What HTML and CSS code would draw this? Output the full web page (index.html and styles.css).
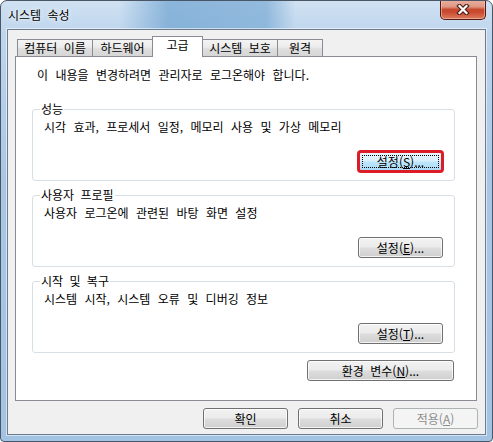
FILE: index.html
```html
<!DOCTYPE html>
<html lang="ko">
<head>
  <meta charset="UTF-8" />
  <meta name="viewport" content="width=device-width, initial-scale=1.0" />
  <title>시스템 속성</title>
  <link rel="stylesheet" href="styles.css">
</head>
<body>

  <div class="window">
    <div class="titlebar">
      <span class="title">시스템 속성</span>
      <button class="close" title="닫기">
        <svg width="16" height="11" viewBox="0 0 16 11">
          <path d="M4.5 2 L11.5 9 M11.5 2 L4.5 9" stroke="#4b1d15" stroke-width="4.4" stroke-linecap="square" fill="none"/>
          <path d="M4.5 2 L11.5 9 M11.5 2 L4.5 9" stroke="#ffffff" stroke-width="2.2" stroke-linecap="square" fill="none"/>
        </svg>
      </button>
    </div>

    <div class="client">
      <div class="tabs">
        <div class="tab t1">컴퓨터 이름</div>
        <div class="tab t2">하드웨어</div>
        <div class="tab t3 active">고급</div>
        <div class="tab t4">시스템 보호</div>
        <div class="tab t5">원격</div>
      </div>

      <div class="panel">
        <p class="note">이 내용을 변경하려면 관리자로 로그온해야 합니다.</p>

        <fieldset class="group">
          <legend>성능</legend>
          <p class="desc">시각 효과, 프로세서 일정, 메모리 사용 및 가상 메모리</p>
          <div class="group-actions">
            <button class="btn focused">설정(<u>S</u>)...</button>
          </div>
        </fieldset>

        <fieldset class="group">
          <legend>사용자 프로필</legend>
          <p class="desc">사용자 로그온에 관련된 바탕 화면 설정</p>
          <div class="group-actions">
            <button class="btn">설정(<u>E</u>)...</button>
          </div>
        </fieldset>

        <fieldset class="group">
          <legend>시작 및 복구</legend>
          <p class="desc">시스템 시작, 시스템 오류 및 디버깅 정보</p>
          <div class="group-actions">
            <button class="btn">설정(<u>T</u>)...</button>
          </div>
        </fieldset>

        <div class="env-row">
          <button class="btn wide">환경 변수(<u>N</u>)...</button>
        </div>
      </div>

      <div class="actions">
        <button class="btn">확인</button>
        <button class="btn">취소</button>
        <button class="btn" disabled>적용(<u>A</u>)</button>
      </div>
    </div>
  </div>

</body>
</html>
```

FILE: styles.css
```css
body {
  margin: 0;
  font-family: "Noto Sans CJK KR", "Liberation Sans", sans-serif;
  font-size: 12px;
  color: #000;
  background-color: #fff;
}

.window {
  width: 493px;
  height: 442px;
  box-sizing: border-box;
  padding: 0 6px 6px 6px;
  border: 1px solid #4a5666;
  border-radius: 7px 7px 4px 4px;
  background:
    linear-gradient(90deg, rgba(255, 255, 255, 0) 24%, rgba(110, 162, 208, 0.7) 34%, rgba(120, 170, 212, 0.7) 54%, rgba(255, 255, 255, 0) 60%) 0 0 / 100% 29px no-repeat,
    linear-gradient(180deg, #d0e1f2 0%, #bdd5ed 8%, #a9c7e5 40%, #a3c3e3 100%);
  overflow: hidden;
}

/* title bar */

.titlebar {
  display: flex;
  align-items: flex-start;
  height: 28px;
  padding-left: 1px;
}

.title {
  margin-top: 6px;
  line-height: 16px;
  word-spacing: 3px;
  text-shadow: 0 0 6px rgba(255, 255, 255, 0.9), 0 0 2px rgba(255, 255, 255, 0.9);
}

.close {
  margin-left: auto;
  margin-top: -1px;
  width: 46px;
  height: 20px;
  padding: 0;
  border: 1px solid #4f1a12;
  border-top: none;
  border-radius: 0 0 5px 5px;
  background: linear-gradient(180deg, #eab0a2 0%, #df9884 35%, #c84a30 50%, #c9482d 62%, #dc7b5d 100%);
  box-shadow: inset 0 0 0 1px rgba(255, 210, 200, 0.5);
  display: flex;
  justify-content: center;
  align-items: center;
}

/* client area */

.client {
  height: 406px;
  box-sizing: border-box;
  padding-top: 6px;
  border: 1px solid #6d7b8c;
  background-color: #f0f0f0;
  box-shadow: 0 0 0 1px rgba(255, 255, 255, 0.55);
}

.tabs {
  display: flex;
  align-items: flex-end;
  height: 20px;
  margin-left: 9px;
  position: relative;
  z-index: 1;
}

.tab {
  box-sizing: border-box;
  height: 17px;
  margin-right: -1px;
  border: 1px solid #898c95;
  border-bottom: none;
  background: linear-gradient(180deg, #f4f4f4 0%, #ebebeb 45%, #dedede 55%, #d6d6d6 100%);
  text-align: center;
  line-height: 15px;
  word-spacing: 3px;
}

.t1 { width: 76px; }
.t2 { width: 61px; }
.t3 { width: 51px; }
.t4 { width: 76px; }
.t5 { width: 46px; }

.tab.active {
  height: 21px;
  margin-bottom: -1px;
  background: #fff;
  line-height: 16px;
  position: relative;
  z-index: 2;
}

.panel {
  width: 462px;
  height: 345px;
  box-sizing: border-box;
  margin-left: 7px;
  padding: 11px 0 0 16px;
  border: 1px solid #898c95;
  background-color: #fff;
}

.note {
  margin: 0 0 20px 5px;
  line-height: 14px;
  word-spacing: 4px;
}

.group {
  width: 423px;
  box-sizing: border-box;
  margin: 0 0 7px 0;
  padding: 0 11px 8px 11px;
  border: 1px solid #d5dfe5;
  border-radius: 3px;
  min-width: 0;
}

.group legend {
  margin-left: -4px;
  padding: 0 1px;
  line-height: 14px;
  word-spacing: 3px;
}

.desc {
  margin: 4px 0 0 0;
  line-height: 14px;
  word-spacing: 4px;
}

.group-actions {
  display: flex;
  justify-content: flex-end;
  margin-top: 17px;
}

.env-row {
  display: flex;
  justify-content: flex-end;
  width: 422px;
  margin-top: 5px;
}

/* buttons */

.btn {
  width: 85px;
  height: 21px;
  box-sizing: border-box;
  padding: 0;
  font-family: inherit;
  font-size: 12px;
  line-height: 19px;
  color: #000;
  border: 1px solid #707070;
  border-radius: 3px;
  background: linear-gradient(180deg, #f2f2f2 0%, #ebebeb 48%, #dddddd 52%, #cfcfcf 100%);
  box-shadow: inset 0 0 0 1px rgba(255, 255, 255, 0.75);
  word-spacing: 3px;
}

.btn.wide {
  width: 147px;
}

.btn.focused {
  position: relative;
  border-color: #3c7fb1;
  background: linear-gradient(180deg, #eaf6fd 0%, #d9f0fc 48%, #bee6fd 52%, #a7d9f5 100%);
  outline: 3px solid #dc1d27;
  outline-offset: -2px;
}

.btn.focused::after {
  content: "";
  position: absolute;
  inset: 3px;
  border: 1px dotted #000;
}

.btn:disabled {
  color: #8d8d8d;
  border-color: #adb2b5;
  background: #f4f4f4;
  box-shadow: none;
}

.actions {
  display: flex;
  justify-content: flex-end;
  gap: 10px;
  margin-top: 7px;
  padding-right: 7px;
}
```
